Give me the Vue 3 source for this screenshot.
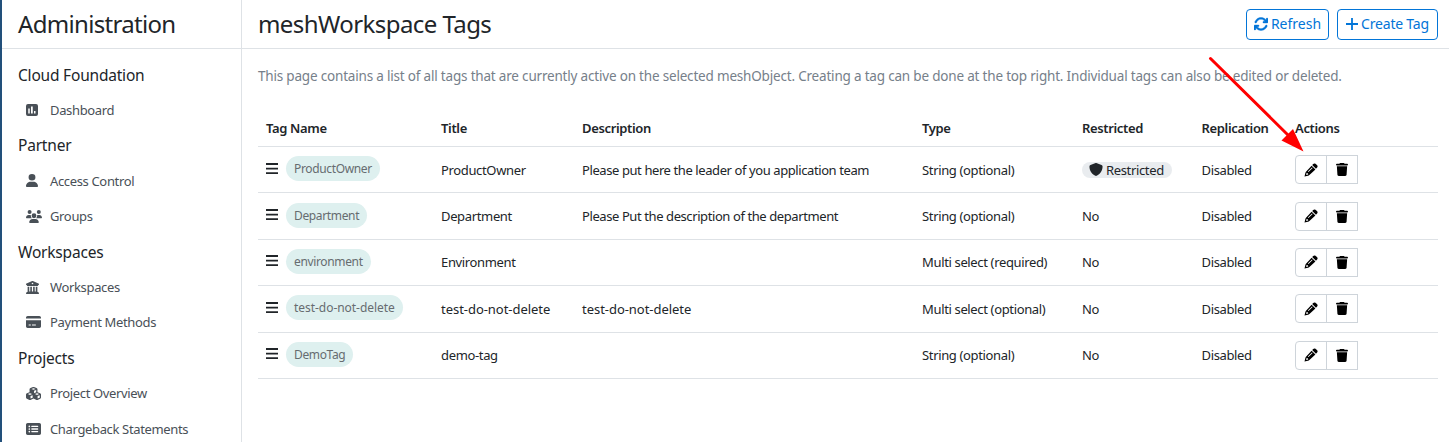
<script setup>
const icons = {
  chart: { box: '0 0 24 24', d: 'M4 0H20A4 4 0 0 1 24 4V20A4 4 0 0 1 20 24H4A4 4 0 0 1 0 20V4A4 4 0 0 1 4 0ZM4.500 9V19H7.500V9ZM10 5V19H13.500V5ZM16 14V19H19V14Z' },
  user: { box: '0 0 448 512', d: 'M224 256A128 128 0 1 0 224 0a128 128 0 1 0 0 256zm-45.700 48C79.800 304 0 383.800 0 482.300C0 498.700 13.300 512 29.700 512H418.300c16.400 0 29.700-13.300 29.700-29.700C448 383.800 368.200 304 269.700 304H178.300z' },
  users: { box: '0 0 640 512', d: 'M144 0a80 80 0 1 1 0 160A80 80 0 1 1 144 0zM512 0a80 80 0 1 1 0 160A80 80 0 1 1 512 0zM0 298.700C0 239.800 47.800 192 106.700 192h42.700c15.900 0 31 3.500 44.600 9.700c-1.300 7.200-1.900 14.700-1.900 22.300c0 38.200 16.800 72.500 43.300 96H21.300C9.600 320 0 310.400 0 298.700zM405.300 320h-.7c26.600-23.500 43.300-57.800 43.300-96c0-7.600-.7-15-1.900-22.300c13.600-6.300 28.700-9.700 44.600-9.700h42.700C592.200 192 640 239.800 640 298.700c0 11.800-9.600 21.300-21.300 21.300H405.300zM224 224a96 96 0 1 1 192 0a96 96 0 1 1-192 0zM128 485.300C128 411.700 187.700 352 261.300 352H378.700C452.300 352 512 411.700 512 485.300c0 14.700-11.900 26.700-26.700 26.700H154.700c-14.700 0-26.700-11.900-26.700-26.700z' },
  bank: { box: '0 0 512 512', d: 'M243.400 2.600l-224 96c-14 6-21.800 21-18.700 35.800S16.800 160 32 160v8c0 13.300 10.700 24 24 24H456c13.300 0 24-10.700 24-24v-8c15.200 0 28.300-10.700 31.300-25.600s-4.800-29.900-18.700-35.800l-224-96c-8-3.400-17.200-3.400-25.200 0zM128 224H64V420.300c-.6.300-1.200.7-1.800 1.100l-48 32c-11.700 7.800-17 22.400-12.900 35.900S17.900 512 32 512H480c14.100 0 26.500-9.200 30.600-22.700s-1.100-28.100-12.900-35.900l-48-32c-.6-.4-1.200-.7-1.800-1.100V224H384V416H344V224H280V416H232V224H168V416H128V224zM256 64a32 32 0 1 1 0 64a32 32 0 1 1 0-64z' },
  card: { box: '0 32 576 448', d: 'M512 32H64C28.700 32 0 60.700 0 96v32H576V96c0-35.300-28.700-64-64-64zM576 192H0V416c0 35.300 28.700 64 64 64H512c35.300 0 64-28.700 64-64V192zM112 352h64c8.800 0 16 7.200 16 16s-7.200 16-16 16H112c-8.800 0-16-7.200-16-16s7.200-16 16-16zm112 16c0-8.800 7.200-16 16-16H368c8.800 0 16 7.200 16 16s-7.200 16-16 16H240c-8.800 0-16-7.200-16-16z' },
  cubes: { box: '0 0 576 512', d: 'M290.800 48.600l78.400 29.700L288 109.500 206.800 78.300l78.400-29.700c1.800-.7 3.800-.7 5.700 0zM136 92.500V204.700c-1.300.4-2.600.8-3.900 1.300l-96 36.400C14.400 250.600 0 271.500 0 294.700V413.900c0 22.200 13.100 42.300 33.500 51.300l96 42.200c14.400 6.300 30.700 6.300 45.100 0L288 457.500l113.500 49.900c14.400 6.300 30.700 6.300 45.100 0l96-42.200c20.300-8.900 33.500-29.100 33.500-51.300V294.700c0-23.300-14.400-44.100-36.100-52.400l-96-36.400c-1.300-.5-2.600-.9-3.900-1.300V92.500c0-23.300-14.400-44.100-36.100-52.400l-96-36.400c-12.800-4.800-26.900-4.800-39.700 0l-96 36.400C150.400 48.400 136 69.300 136 92.500zM392 210.600l-82.400 31.200V152.600L392 121v89.600zM154.800 250.900l78.400 29.700L152 311.700 70.800 280.600l78.400-29.700c1.800-.7 3.800-.7 5.700 0zm18.800 204.400V354.800L256 323.200v95.900l-82.400 36.200zM421.200 250.900c1.800-.7 3.800-.7 5.700 0l78.400 29.700L424 311.700l-81.200-31.100 78.400-29.700zM523.200 421.200l-77.600 34.100V354.800L528 323.200v90.700c0 3.200-1.900 6-4.800 7.300z' },
  list: { box: '0 32 576 448', d: 'M0 96C0 60.700 28.700 32 64 32H512c35.300 0 64 28.700 64 64V416c0 35.300-28.700 64-64 64H64c-35.300 0-64-28.700-64-64V96zM128 192a32 32 0 1 0 0-64 32 32 0 1 0 0 64zm32 64a32 32 0 1 0-64 0 32 32 0 1 0 64 0zm-32 128a32 32 0 1 0 0-64 32 32 0 1 0 0 64zm96-248c-13.300 0-24 10.700-24 24s10.700 24 24 24H448c13.300 0 24-10.700 24-24s-10.700-24-24-24H224zm0 96c-13.300 0-24 10.700-24 24s10.700 24 24 24H448c13.300 0 24-10.700 24-24s-10.700-24-24-24H224zm0 96c-13.300 0-24 10.700-24 24s10.700 24 24 24H448c13.300 0 24-10.700 24-24s-10.700-24-24-24H224z' },
}
const nav = [
  { title: 'Cloud Foundation', key: 'cloud', items: [{ label: 'Dashboard', icon: 'chart', w: 12, h: 12 }] },
  { title: 'Partner', key: 'partner', items: [
    { label: 'Access Control', icon: 'user', w: 12, h: 13 },
    { label: 'Groups', icon: 'users', w: 16, h: 13 },
  ] },
  { title: 'Workspaces', key: 'workspaces', items: [
    { label: 'Workspaces', icon: 'bank', w: 13, h: 13 },
    { label: 'Payment Methods', icon: 'card', w: 15, h: 12 },
  ] },
  { title: 'Projects', key: 'projects', items: [
    { label: 'Project Overview', icon: 'cubes', w: 15, h: 13 },
    { label: 'Chargeback Statements', icon: 'list', w: 15, h: 12 },
  ] },
]
const columns = ['Tag Name', 'Title', 'Description', 'Type', 'Restricted', 'Replication', 'Actions']
const rows = [
  { tag: 'ProductOwner', title: 'ProductOwner', desc: 'Please put here the leader of you application team', type: 'String (optional)', restricted: true },
  { tag: 'Department', title: 'Department', desc: 'Please Put the description of the department', type: 'String (optional)' },
  { tag: 'environment', title: 'Environment', desc: '', type: 'Multi select (required)' },
  { tag: 'test-do-not-delete', title: 'test-do-not-delete', desc: 'test-do-not-delete', type: 'Multi select (optional)', slug: true },
  { tag: 'DemoTag', title: 'demo-tag', desc: '', type: 'String (optional)' },
]
</script>

<template>
  <div class="app">
    <aside class="sidebar">
      <header class="bar"><h1>Administration</h1></header>
      <nav>
        <template v-for="g in nav" :key="g.key">
          <div class="group"><span>{{ g.title }}</span></div>
          <a v-for="i in g.items" :key="i.label" class="item">
            <span class="ico"><svg :width="i.w" :height="i.h" :viewBox="icons[i.icon].box" preserveAspectRatio="none"><path fill-rule="evenodd" :d="icons[i.icon].d" /></svg></span>
            <span>{{ i.label }}</span>
          </a>
        </template>
      </nav>
    </aside>
    <main>
      <header class="bar main-bar">
        <h1 class="page-title">meshWorkspace Tags</h1>
        <div class="buttons">
          <button class="btn refresh">
            <svg width="14" height="14" viewBox="16 16 480 480"><path d="M105.100 202.600c7.700-21.800 20.200-42.300 37.800-59.800c62.500-62.500 163.800-62.500 226.300 0L386.300 160H352c-17.700 0-32 14.300-32 32s14.300 32 32 32H463.500c17.700 0 32-14.300 32-32V80c0-17.700-14.300-32-32-32s-32 14.300-32 32v35.200L414.400 97.600c-87.500-87.500-229.300-87.500-316.800 0C73.200 122 55.600 150.700 44.800 181.400c-5.900 16.700 2.900 34.900 19.500 40.800s34.900-2.900 40.800-19.500zM39 289.300c-5 1.500-9.800 4.200-13.700 8.200c-4 4-6.700 8.800-8.100 14c-.8 3-1.200 6.200-1.200 8.500V432c0 17.700 14.300 32 32 32s32-14.300 32-32V396.900l17.600 17.500c87.500 87.400 229.300 87.400 316.700 0c24.400-24.400 42.100-53.100 52.900-83.700c5.900-16.700-2.900-34.900-19.500-40.800s-34.900 2.900-40.800 19.500c-7.700 21.800-20.200 42.300-37.800 59.800c-62.500 62.500-163.800 62.500-226.300 0L125.600 352H160c17.700 0 32-14.300 32-32s-14.300-32-32-32H48.400c-3.200 0-6.400.4-9.400 1.300z" stroke="currentColor" stroke-width="12" /></svg>
            <span>Refresh</span>
          </button>
          <button class="btn create">
            <svg width="12" height="14" viewBox="0 0 12 14"><path d="M5.100 1H6.900V6.100H12V7.900H6.900V13H5.100V7.900H0V6.100H5.100Z" /></svg>
            <span>Create Tag</span>
          </button>
        </div>
      </header>
      <p class="intro">This page contains a list of all tags that are currently active on the selected meshObject. Creating a tag can be done at the top right. Individual tags can also be edited or deleted.</p>
      <section class="table">
        <div class="row head"><span v-for="c in columns" :key="c">{{ c }}</span></div>
        <div v-for="r in rows" :key="r.tag" class="row">
          <div class="tag-cell">
            <svg width="12" height="12" viewBox="0 0 12 12"><path d="M0 0H12V2H0ZM0 4.700H12V6.500H0ZM0 9.200H12V11H0Z" /></svg>
            <span class="tag" :class="{ slug: r.slug }">{{ r.tag }}</span>
          </div>
          <span :class="{ slug: r.slug }">{{ r.title }}</span>
          <span class="desc" :class="{ slug: r.slug }">{{ r.desc }}</span>
          <span>{{ r.type }}</span>
          <span v-if="r.restricted" class="badge">
            <svg width="14" height="13" viewBox="0 0 512 512" preserveAspectRatio="none"><path d="M256 0c4.600 0 9.200 1 13.400 2.900L457.700 82.800c22 9.300 38.400 31 38.300 57.200c-.5 99.200-41.300 280.700-213.600 363.200c-16.700 8-36.100 8-52.800 0C57.300 420.700 16.500 239.200 16 140c-.1-26.200 16.300-47.900 38.300-57.200L242.700 2.900C246.800 1 251.400 0 256 0z" /></svg>
            <span>Restricted</span>
          </span>
          <span v-else>No</span>
          <span>Disabled</span>
          <div class="actions">
            <button><svg width="14" height="14" viewBox="0 0 14 14"><path fill-rule="evenodd" d="M9.200 1.100C9.800.3 10.900.2 11.700.9L13 2.100C13.800 2.900 13.800 3.900 13.100 4.600L12 5.700L8.200 2.100ZM7.600 2.700L11.400 6.400L5.400 12.100C4.900 12.600 4.500 12.700 4 12.800L.5 13.500L1.300 10.200C1.400 9.600 1.600 9.200 2 8.700ZM8 4.400L3.900 8.500L4.500 9.100L8.600 5ZM2.600 9.800L2.200 11.900L4.200 11.500L4 10.400L3.300 10.200Z" /></svg></button>
            <button><svg width="12" height="13" viewBox="0 0 448 512" preserveAspectRatio="none"><path d="M135.200 17.700L128 32H32C14.300 32 0 46.300 0 64S14.300 96 32 96H416c17.700 0 32-14.300 32-32s-14.300-32-32-32H320l-7.200-14.300C307.400 6.800 296.300 0 284.200 0H163.800c-12.100 0-23.200 6.800-28.600 17.700zM416 128H32L53.200 467c1.600 25.300 22.600 45 47.900 45H346.900c25.300 0 46.300-19.700 47.900-45L416 128z" /></svg></button>
          </div>
        </div>
      </section>
    </main>
    <svg class="arrow" width="100" height="100" viewBox="0 0 100 100"><path d="M6.500 4.500L86 83" stroke="#f00" stroke-width="3" stroke-linecap="round" /><path d="M99.500 97.500L77.500 86.500L89 75Z" fill="#f00" /></svg>
  </div>
</template>

<style>
body { margin: 0; background: #fff; }
</style>

<style scoped>
.app { position: relative; box-sizing: border-box; display: flex; width: 1449px; height: 442px; overflow: hidden; border-left: 2px solid #22507b; background: #fff; color: #212529; font-family: "Noto Sans", sans-serif; font-size: 13px; letter-spacing: -0.35px; line-height: 20px; white-space: nowrap; }
.app svg { display: block; flex: none; fill: currentColor; }
.sidebar { box-sizing: border-box; width: 240px; flex: none; border-right: 1px solid #dee2e6; }
.bar { box-sizing: border-box; height: 49px; border-bottom: 1px solid #dee2e6; padding-left: 16px; display: flex; align-items: center; }
h1 { margin: 0; font-size: 24px; font-weight: 400; line-height: 32px; letter-spacing: -0.68px; }
.page-title { letter-spacing: -0.57px; }
nav { padding-top: 8px; }
.group, .item { height: 35.400px; display: flex; align-items: center; }
.group { padding-left: 16px; font-size: 15.500px; letter-spacing: -0.2px; }
.item { padding-left: 24px; color: #495057; }
.ico { width: 24px; flex: none; }
main { flex: 1; min-width: 0; }
.main-bar { justify-content: space-between; padding-right: 11px; }
.buttons { display: flex; gap: 8px; }
.btn { box-sizing: border-box; height: 31px; display: flex; align-items: center; justify-content: center; gap: 3px; padding: 0; border: 1px solid #0275d8; border-radius: 4px; background: #fff; color: #0275d8; font: inherit; font-size: 14px; letter-spacing: -0.2px; }
.refresh { width: 83px; }
.refresh span { letter-spacing: 0; }
.refresh { letter-spacing: 0; }
.create { width: 101px; }
.intro { margin: 17px 0 0 16px; color: #76808a; font-size: 13.500px; letter-spacing: -0.19px; }
.table { margin: 24px 11px 0 16px; }
.row { box-sizing: border-box; height: 46.400px; display: grid; grid-template-columns: 175px 141px 340px 160px 119.500px 93.500px 1fr; align-items: center; padding-left: 8px; border-bottom: 1px solid #dee2e6; }
.row > span { margin-top: -0.400px; }
.head { height: 37px; font-weight: 600; }
.desc { letter-spacing: -0.41px; }
.tag-cell { display: flex; align-items: center; gap: 8px; margin-top: -2px; }
.tag { height: 25px; line-height: 26px; border-radius: 13px; padding: 0 8px; background: #def0ef; color: #666c70; font-size: 12px; }
.slug { letter-spacing: -0.04px; }
.badge { justify-self: start; display: flex; align-items: center; gap: 3px; height: 16px; border-radius: 8px; background: #e9ecef; padding: 0 8px 0 7px; }
.actions { display: flex; }
.actions button { box-sizing: border-box; width: 32px; height: 29px; display: flex; align-items: center; justify-content: center; padding: 0; border: 1px solid #ced4da; background: #fff; color: #000; }
.actions button:first-child { border-radius: 4px 0 0 4px; }
.actions button + button { margin-left: -1px; }
.arrow { position: absolute; left: 1202px; top: 54px; }
</style>
